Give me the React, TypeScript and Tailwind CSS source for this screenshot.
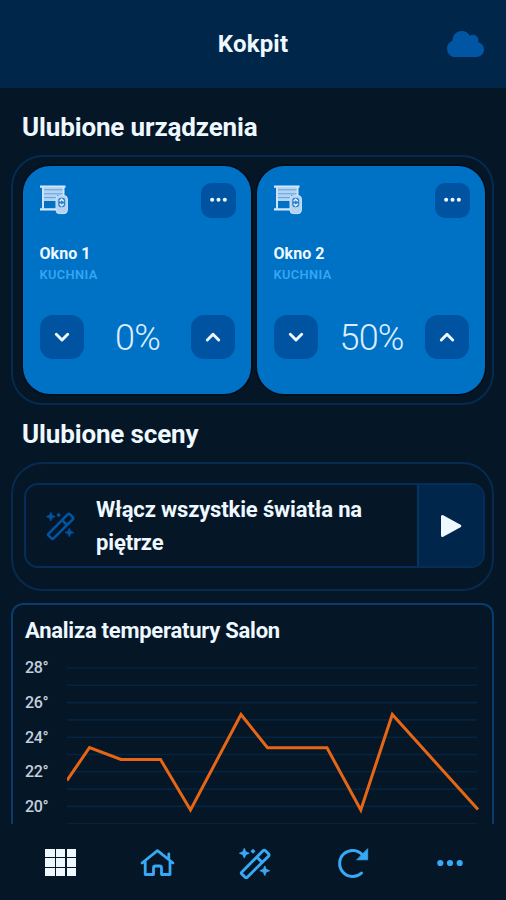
import { FaCloud } from "react-icons/fa";

const devices = [
  { name: "Okno 1", room: "KUCHNIA", value: "0%" },
  { name: "Okno 2", room: "KUCHNIA", value: "50%" },
];

const ticks = ["28°", "26°", "24°", "22°", "20°"];

const series = [
  [0, 112.5], [22.5, 79.5], [54, 91.5], [93.5, 91.5], [123.5, 142], [174, 46.5],
  [200.5, 79.8], [260, 79.8], [293.8, 142], [325.3, 46.5], [411, 141.5],
];

function BlindIcon() {
  return (
    <svg className="h-[30px] w-[29px]" viewBox="0 0 29 30" fill="none">
      <path d="M3 2.5H24V10H17V16H3Z" fill="#b4d3f2" />
      <path d="M0 1.7H25.5M0 24.3H17" stroke="#d6e7f9" strokeWidth="2.2" />
      <path d="M3 2V24M23.5 2V11" stroke="#cfe3f8" strokeWidth="2" />
      <path d="M4 4.8H22.5M4 8.8H22.5M4 12.6H17" stroke="#5ea3de" strokeWidth="1" />
      <rect x="16" y="10.6" width="11.4" height="18" rx="3.4" fill="#b4d3f2" stroke="#cfe3f8" strokeWidth="1" />
      <rect x="18.2" y="12.8" width="7" height="9.4" rx="3" fill="#2b83cf" />
      <path d="M19.7 16.2L21.7 14.2L23.7 16.2M19.7 18.8L21.7 20.8L23.7 18.8" stroke="#eef6ff" strokeWidth="1.4" />
    </svg>
  );
}

function Chevron({ up = false }: { up?: boolean }) {
  return (
    <button className="flex size-[44px] items-center justify-center rounded-[13px] bg-[#0053a0]">
      <svg className="size-4" viewBox="0 0 16 16" fill="none" stroke="#f0f8ff" strokeWidth="2.9" strokeLinecap="round" strokeLinejoin="round">
        <path d={up ? "M2.3 11L8 5.3L13.7 11" : "M2.3 5.3L8 11L13.7 5.3"} />
      </svg>
    </button>
  );
}

function Wand({ className }: { className: string }) {
  return (
    <svg className={className} viewBox="0 0 32 32" fill="none" stroke="currentColor" strokeWidth="2.9" strokeLinejoin="round">
      <path d="M2.7 25.3L24 3.7Q25.2 2.5 26.4 3.7L29.5 6.8Q30.7 8 29.5 9.2L8.3 30.2Q7.2 31.2 6.1 30.2L2.7 26.9Q1.9 26.1 2.7 25.3ZM17.8 10L23.2 15.4" />
      <path d="M5.3 1.3L6.8 4.8L10.2 6.2L6.8 7.7L5.3 11.1L3.8 7.7L.4 6.2L3.8 4.8ZM25.8 18.9L27.2 22.3L30.7 23.7L27.2 25.1L25.8 28.6L24.3 25.1L20.9 23.7L24.3 22.3Z" fill="currentColor" stroke="currentColor" strokeWidth=".8" />
      <path d="M14 1.8L16.5 4.3L14 6.8L11.5 4.3Z" fill="currentColor" stroke="none" />
    </svg>
  );
}

function Dots({ className }: { className: string }) {
  return (
    <svg className={className} viewBox="0 0 26 8" fill="currentColor">
      <circle cx="3.3" cy="4" r="3.1" />
      <circle cx="13" cy="4" r="3.1" />
      <circle cx="22.7" cy="4" r="3.1" />
    </svg>
  );
}

function DeviceCard({ name, room, value }: { name: string; room: string; value: string }) {
  return (
    <article className="flex h-[228px] w-[228px] shrink-0 flex-col rounded-[27px] bg-[#0072c6] pr-[15.5px] pl-[16.5px] shadow-[0_0_0_1.5px_#030d19]">
      <div className="flex items-start justify-between pt-[17px]">
        <div className="pt-[2px]"><BlindIcon /></div>
        <button className="flex size-[35px] items-center justify-center rounded-[10px] bg-[#0053a0] pb-px text-[#f0f8ff]">
          <Dots className="h-[5.5px] w-[17px]" />
        </button>
      </div>
      <h3 className="mt-[26px] text-[16px] leading-[20px] font-bold tracking-[0.05px] text-[#f0f8ff]">{name}</h3>
      <p className="mt-[3px] text-[12.8px] leading-[16px] font-semibold tracking-[0.4px] text-[#36a5f4]">{room}</p>
      <div className="mt-[32px] flex items-center justify-between">
        <Chevron />
        <span className="pt-[3px] text-[36px] leading-[41px] font-light tracking-[-0.9px] text-[#dcedff]">{value}</span>
        <Chevron up />
      </div>
    </article>
  );
}

export default function App() {
  return (
    <div className="flex h-[900px] w-[506px] flex-col overflow-hidden bg-[#051627] font-['Roboto',sans-serif] text-[#eef8ff]">
      <header className="grid h-[88px] shrink-0 grid-cols-[1fr_auto_1fr] items-center bg-[#002649] pr-[22px]">
        <span className="w-[22px]" />
        <h1 className="translate-x-[11px] text-[24px] leading-[28px] font-bold tracking-[0.2px]">Kokpit</h1>
        <FaCloud className="h-[30px] w-[37px] justify-self-end text-[#0056a3]" />
      </header>

      <main className="flex h-[736px] shrink-0 flex-col overflow-hidden pr-[12px] pl-[11px]">
        <h2 className="mt-[23px] ml-[11px] text-[26px] leading-[32px] font-bold tracking-[-0.14px]">Ulubione urządzenia</h2>
        <section className="mt-[12px] flex h-[250px] shrink-0 gap-[6px] rounded-[32px] border-2 border-[#062b4f] pt-[9px] pl-[10px]">
          {devices.map((d) => <DeviceCard key={d.name} {...d} />)}
        </section>

        <h2 className="mt-[13px] ml-[11px] text-[26px] leading-[32px] font-bold tracking-[-0.14px]">Ulubione sceny</h2>
        <section className="mt-[12px] h-[129px] shrink-0 rounded-[32px] border-2 border-[#062b4f] pt-[19px] pr-[7px] pl-[11px]">
          <div className="flex h-[85px] overflow-hidden rounded-[14px] border-2 border-[#062d55]">
            <div className="flex w-[70px] shrink-0 items-center justify-center pr-px text-[#0054a2]">
              <Wand className="size-[29px]" />
            </div>
            <p className="w-[321px] shrink-0 pt-[8px] text-[22px] leading-[33px] font-bold tracking-[-0.15px]">Włącz wszystkie światła na piętrze</p>
            <button className="flex flex-1 items-center justify-center border-l-2 border-[#06365f] bg-[#00264c]">
              <svg className="h-6 w-[22px]" viewBox="0 0 22 24">
                <path d="M2.5 2.5V21.5L19.8 12Z" fill="#eef8ff" stroke="#eef8ff" strokeWidth="3" strokeLinejoin="round" />
              </svg>
            </button>
          </div>
        </section>

        <section className="mt-[12px] h-[240px] shrink-0 rounded-t-[12px] border-2 border-b-0 border-[#073c6b] px-[12px]">
          <h2 className="mt-[12px] text-[22px] leading-[28px] font-bold tracking-[-0.25px]">Analiza temperatury Salon</h2>
          <div className="mt-[6px] flex">
            <div className="w-[41.5px] shrink-0 text-[16px] font-medium text-[#c3d0de]">
              {ticks.map((t) => <div key={t} className="h-[34.8px] leading-[34px] tracking-[-0.3px]">{t}</div>)}
            </div>
            <svg className="h-[180px] w-[416px] shrink-0" viewBox="0 0 416 180" fill="none">
              {Array.from({ length: 10 }, (_, i) => (
                <path key={i} d={`M0 ${17 + i * 17.3}H410`} stroke="#04243f" strokeWidth="1.6" />
              ))}
              <polyline points={series.map(([x, y]) => `${x},${y + 17}`).join(" ")} stroke="#e66616" strokeWidth="3" />
            </svg>
          </div>
        </section>
      </main>

      <nav className="flex h-[76px] shrink-0 items-center bg-[#051627] pt-px pl-[12px] text-[#37a9f5]">
        <button className="flex w-[97.3px] shrink-0 justify-center">
          <span className="grid h-[27px] w-[31px] grid-cols-3 gap-[1.3px]">
            {Array.from({ length: 9 }, (_, i) => <span key={i} className="bg-[#eef8ff]" />)}
          </span>
        </button>
        <button className="flex w-[97.3px] shrink-0 justify-center">
          <svg className="h-[30px] w-[35px]" viewBox="0 0 35 30" fill="none" stroke="currentColor" strokeWidth="2.8" strokeLinecap="round" strokeLinejoin="round">
            <path d="M2 15L17.5 2.6L33 15M5.2 13V26.5H13.5V20Q13.5 18 15.5 18H19.5Q21.5 18 21.5 20V26.5H30V13M28.8 10.5V6" />
          </svg>
        </button>
        <button className="flex w-[97.3px] shrink-0 justify-center"><Wand className="size-[32px]" /></button>
        <button className="flex w-[97.3px] shrink-0 justify-center">
          <svg className="h-[32px] w-[32px]" viewBox="0 0 32 32" fill="none" stroke="currentColor" strokeWidth="3" strokeLinecap="round">
            <path d="M24.5 26A13 13 0 1 1 25.5 8" />
            <path d="M30.7 2V12.8H20Z" fill="currentColor" stroke="currentColor" strokeWidth=".8" />
          </svg>
        </button>
        <button className="flex w-[97.3px] shrink-0 justify-center"><Dots className="h-[8px] w-[26px]" /></button>
      </nav>
    </div>
  );
}
